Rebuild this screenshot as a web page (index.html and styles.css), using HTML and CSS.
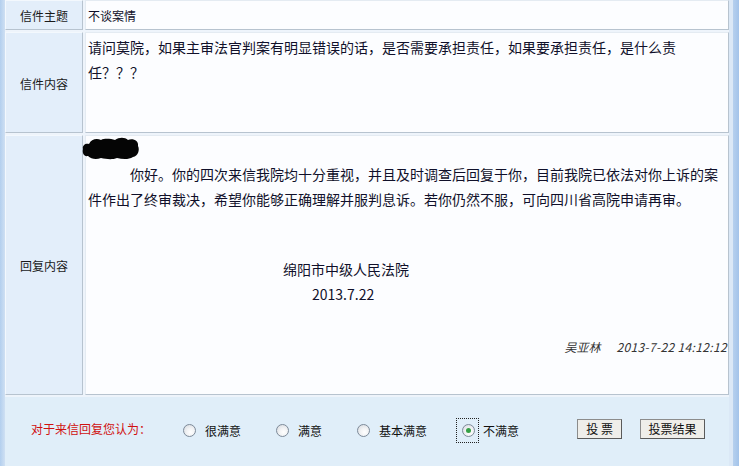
FILE: index.html
```html
<!DOCTYPE html>
<html lang="zh-CN">
<head>
<meta charset="utf-8">
<title>信件详情</title>
<link rel="stylesheet" href="styles.css">
</head>
<body>
<div class="frame">
  <div class="edge-left"></div>
  <div class="main">
    <div class="grid">
      <div class="label row1">信件主题</div>
      <div class="cell row1 small">不谈案情</div>

      <div class="label row2">信件内容</div>
      <div class="cell row2">请问莫院，如果主审法官判案有明显错误的话，是否需要承担责任，如果要承担责任，是什么责<br>任？？？</div>

      <div class="label row3">回复内容</div>
      <div class="cell row3">
        <div class="blob-line">
          <svg class="blob" width="58" height="23" viewBox="0 0 58 23">
            <path d="M1 12 C0 8 4 6 7 7 C9 2 15 1 19 3 C23 1 29 2 33 3 C37 0 43 0 46 3 C51 1 57 4 56 9 C58 13 56 19 51 20 C46 23 40 22 35 21 C30 23 24 22 19 21 C14 23 9 22 6 19 C2 20 0 16 1 12 Z" fill="#050505"/>
          </svg>
        </div>
        <p class="reply">你好。你的四次来信我院均十分重视，并且及时调查后回复于你，目前我院已依法对你上诉的案件作出了终审裁决，希望你能够正确理解并服判息诉。若你仍然不服，可向四川省高院申请再审。</p>
        <div class="court">绵阳市中级人民法院</div>
        <div class="date">2013.7.22</div>
        <div class="sign"><span class="sign-name">吴亚林</span><span class="sign-time">2013-7-22 14:12:12</span></div>
      </div>
    </div>

    <div class="vote">
      <span class="vote-title">对于来信回复您认为：</span>
      <label class="opt"><span class="radio"></span>很满意</label>
      <label class="opt"><span class="radio"></span>满意</label>
      <label class="opt"><span class="radio"></span>基本满意</label>
      <label class="opt focused"><span class="focus-ring"><span class="radio checked"></span></span>不满意</label>
      <button class="btn btn-vote">投 票</button>
      <button class="btn btn-result">投票结果</button>
    </div>
  </div>
  <div class="edge-right"><div class="edge-inner"></div><div class="edge-outer"></div></div>
</div>
</body>
</html>
```
FILE: styles.css
```css
* { box-sizing: border-box; }
html, body { margin: 0; padding: 0; }
body {
  width: 739px;
  height: 466px;
  overflow: hidden;
  font-family: "Noto Sans CJK SC", "Noto Sans", sans-serif;
  color: #111;
  background: #e0eef9;
}
.frame {
  display: flex;
  height: 466px;
}
.edge-left {
  width: 5px;
  background: linear-gradient(to right, #b3cfee, #cfe0f3);
  flex: none;
}
.main {
  width: 724px;
  flex: none;
  display: flex;
  flex-direction: column;
}
.edge-right {
  width: 10px;
  flex: none;
  display: flex;
}
.edge-inner { width: 4px; background: #dbe8f6; }
.edge-outer { width: 6px; background: linear-gradient(to right, #b6d0ee, #a3c3e9); }

.grid {
  display: grid;
  grid-template-columns: 78px 644px;
  grid-template-rows: 30px 101px 260px;
  gap: 2px;
  background: #eef4fb;
  padding-bottom: 2px;
}
.label {
  background: #e3eefa;
  border: 1px solid;
  border-color: #f3f8fd #b7c3cf #b7c3cf #f3f8fd;
  font-size: 12px;
  display: flex;
  align-items: center;
  justify-content: center;
  color: #1a1a1a;
}
.cell {
  background: #fcfdff;
  border: 1px solid;
  border-color: #e4ebf2 #b7c3cf #b7c3cf #e4ebf2;
  padding: 2px 3px 0 2px;
  font-size: 14px;
  line-height: 25px;
  color: #10102a;
}
.cell.small {
  font-size: 12px;
  display: flex;
  align-items: center;
  padding-top: 0;
}
.row2 { padding-top: 2px; }
.row3 { padding-top: 1px; }

.blob-line {
  height: 25px;
  padding-top: 0;
}
.blob {
  display: block;
  margin-left: -6px;
}
.reply {
  margin: 0;
  text-indent: 42px;
}
.court {
  margin-top: 45px;
  padding-left: 195px;
}
.date {
  padding-left: 224px;
}
.sign {
  margin-top: 27px;
  margin-right: -2px;
  text-align: right;
  font-size: 12px;
  font-style: italic;
  color: #333;
}
.sign-name { margin-right: 16px; }
.sign-time { letter-spacing: 0.35px; }

.vote {
  flex: 1;
  display: flex;
  align-items: center;
  padding: 0 0 2px 26px;
  font-size: 12px;
  background: #e0eef9;
}
.vote-title {
  color: #d01010;
  margin-right: 32px;
  margin-top: -4px;
}
.opt {
  display: flex;
  align-items: center;
  margin-right: 35px;
  color: #111;
}
.radio {
  width: 13px;
  height: 13px;
  border-radius: 50%;
  border: 1px solid #7d8a99;
  background: radial-gradient(circle at 60% 65%, #ffffff 0%, #f2f3f5 40%, #d2d6dc 100%);
  margin-right: 9px;
  display: inline-flex;
  align-items: center;
  justify-content: center;
  flex: none;
}
.radio.checked::after {
  content: "";
  width: 5px;
  height: 5px;
  border-radius: 50%;
  background: #35a046;
}
.opt.focused { margin-right: 58px; margin-left: -6px; }
.focus-ring {
  border: 1px dotted #222;
  padding: 5px 1px 5px 5px;
  margin-right: 4px;
  display: flex;
}
.focus-ring .radio { margin-right: 2px; }
.btn {
  font-family: "Noto Sans CJK SC", sans-serif;
  font-size: 12px;
  height: 20px;
  padding: 0;
  line-height: 16px;
  background: #efeeea;
  border: 1px solid;
  border-color: #8c8c8c #5a5a5a #5a5a5a #8c8c8c;
  color: #111;
  margin-top: -3px;
}
.btn-vote { width: 45px; margin-right: 18px; }
.btn-result { width: 65px; }
```
